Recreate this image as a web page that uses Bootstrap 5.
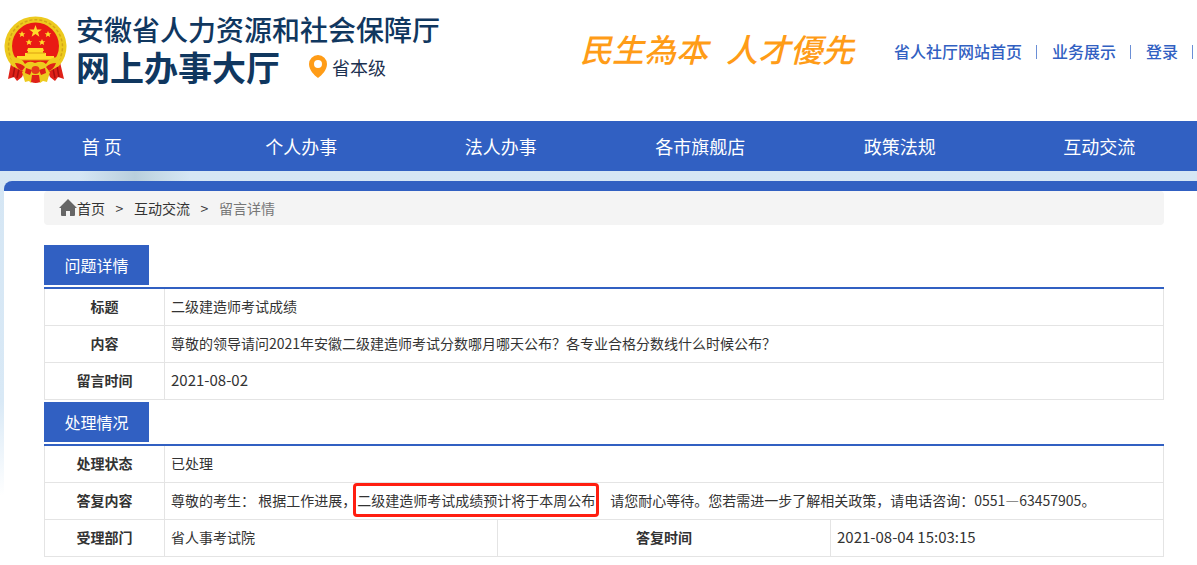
<!DOCTYPE html>
<html lang="zh-CN">
<head>
<meta charset="utf-8">
<meta name="viewport" content="width=device-width, initial-scale=1">
<title>安徽省人力资源和社会保障厅 网上办事大厅</title>
<link href="https://cdn.jsdelivr.net/npm/bootstrap@5.3.0/dist/css/bootstrap.min.css" rel="stylesheet">
<style>
:root{--brand:#3160c2;--navy:#10375f;--line:#e4e4e4}
body{font-family:"Noto Sans CJK SC",sans-serif;font-size:14px;line-height:20px;color:#333;background:#fff;overflow-x:hidden}
a{text-decoration:none}
.site-head{min-height:121px;padding:10px 0 0 4px}
.emblem{width:64px;height:72px;flex:none;margin-top:2px}
.org-name{font-size:28px;line-height:38px;font-weight:500;color:var(--navy);margin:0}
.hall-name{font-size:34px;line-height:38px;font-weight:700;color:var(--navy);margin:0}
.region{font-size:18px;line-height:24px;color:#1c3150}
.slogan{font-size:32px;line-height:40px;font-style:italic;font-weight:500;color:#ff9c17;gap:18px;margin-top:18px}
.top-links{font-size:16px;line-height:24px;margin-top:29px}
.top-links a{color:var(--brand);font-weight:500}
.top-links i{width:1px;height:14px;background:#6b8fd6;margin:2px 15px 0 14px}
.main-nav{background:var(--brand);overflow:hidden}
.main-nav ul{margin:0 -2px 0 2px}
.main-nav a{color:#fff;font-size:18px;line-height:50px;padding:0}
.backdrop{background:linear-gradient(90deg,transparent 80px,#b9cfdc 135px,#c5d9e5 155px,transparent 190px) 0 0/100% 10px no-repeat,linear-gradient(#d5e6f4 0,#d9e9f6 230px,#fff 325px);padding:10px 0 0 4px}
.panel{background:#fff;border-top:10px solid var(--brand);border-top-left-radius:8px;padding:0 33px 6px 40px}
.crumbs{background:#f4f4f4;border-radius:4px;height:34px;padding:0 0 0 15px;margin-bottom:20px}
.crumbs a{color:#333}
.crumbs .sep{width:29px;text-align:center}
.crumbs .here{color:#777}
.section-head{border-bottom:2px solid var(--brand);padding-bottom:2px}
.section-head h2{background:var(--brand);color:#fff;font-size:16px;line-height:40px;font-weight:400;width:105px;text-align:center;margin:0}
.info{width:100%;table-layout:fixed;border-collapse:separate;border-spacing:0;border-left:1px solid var(--line);margin-bottom:2px}
.info th,.info td{height:37px;padding:0 6px 2px;border:solid var(--line);border-width:0 1px 1px 0}
.info th{text-align:center;font-weight:700}
.info .c-label{width:120px}
.info time{font-size:15px}
.boxed{outline:3px solid #ff1e10;border-radius:1px;padding:4px 1px}
</style>
</head>
<body>
<header class="site-head d-flex align-items-start">
  <svg class="emblem" viewBox="0 0 64 72" aria-hidden="true">
    <path d="M8 46 4 67l6-2 3 4 5-4 5-12M55 46l5 21-6-2-3 4-5-4-5-12" fill="#df2118"/>
    <path d="M11 54 9 65M15 57l-2 9M53 54l2 11M49 57l2 9" stroke="#a8110e" stroke-width="1.500"/>
    <path d="M8 54A31 30 0 1 1 55 54L44 60H20z" fill="#edca1e"/>
    <path d="M8 48A27 27 0 1 1 55 48" fill="none" stroke="#d3a417" stroke-width="1.500" stroke-dasharray="3 2"/>
    <path d="M18 60 21 70l4-1 2 2 4-6 5 6 3-2 4 1 3-10-13-6z" fill="#edca1e"/>
    <circle cx="31.500" cy="34" r="23.500" fill="#e91a14"/>
    <g fill="#ffdc2b">
      <path d="m31.500 13 1.600 4.400h4.700l-3.700 2.900 1.300 4.500-3.900-2.700-3.900 2.700 1.300-4.500-3.700-2.900h4.700z"/>
      <path id="small-star" d="m18 19 1 2.200h2.300l-1.800 1.500.7 2.300-2.200-1.300-2.200 1.300.7-2.300-1.800-1.500H17z"/>
      <use href="#small-star" x="26"/><use href="#small-star" x="7" y="8"/><use href="#small-star" x="20" y="8"/>
      <path d="M24 36h15l1 3h-1v2h3v3h8v4H13v-4h8v-3h3v-2h-1z"/>
    </g>
    <path d="M14 48h35M23 41h18" stroke="#dca013"/>
    <path d="M6 45q11-1 15 7 4-4 10-1 7-3 11 1 4-8 15-7-3 8-13 11l-6 2-3 5h-7l-3-5-6-2Q9 53 6 45z" fill="#edca1e"/>
    <path d="M11 51q6 0 10 4l-3 4q-5-2-7-8zM52 51q-6 0-10 4l3 4q5-2 7-8zM22 56l6 2-2 5-5-2zM41 56l-6 2 2 5 5-2zM28 63h7l1 7q-4 2-9 0z" fill="#df2118"/>
    <circle cx="31.500" cy="58" r="4" fill="#e63b18"/>
  </svg>
  <div class="ps-2">
    <p class="org-name text-nowrap">安徽省人力资源和社会保障厅</p>
    <div class="d-flex align-items-center">
      <h1 class="hall-name text-nowrap">网上办事大厅</h1>
      <a href="#" class="region d-flex align-items-center ms-4">
        <svg class="ms-1 me-1" width="20" height="24" viewBox="0 0 20 24" aria-hidden="true"><path d="M10 0a9 9 0 0 0-9 9c0 6 5 11 9 14 4-3 9-8 9-14a9 9 0 0 0-9-9zm0 5a4 4 0 1 1 0 8 4 4 0 0 1 0-8z" fill="#ff9c17" fill-rule="evenodd"/></svg>省本级</a>
    </div>
  </div>
  <div class="slogan d-flex text-nowrap ms-auto"><span>民生為本</span><span>人才優先</span></div>
  <nav class="top-links d-flex align-items-center text-nowrap ms-4 ps-3" aria-label="快捷链接">
    <a href="#">省人社厅网站首页</a><i></i><a href="#">业务展示</a><i></i><a href="#">登录</a><i class="me-1"></i>
  </nav>
</header>

<nav class="main-nav" aria-label="主导航">
  <ul class="nav nav-fill row row-cols-6 gx-0 flex-nowrap">
    <li class="nav-item col"><a class="nav-link" href="#">首 页</a></li>
    <li class="nav-item col"><a class="nav-link" href="#">个人办事</a></li>
    <li class="nav-item col"><a class="nav-link" href="#">法人办事</a></li>
    <li class="nav-item col"><a class="nav-link" href="#">各市旗舰店</a></li>
    <li class="nav-item col"><a class="nav-link" href="#">政策法规</a></li>
    <li class="nav-item col"><a class="nav-link" href="#">互动交流</a></li>
  </ul>
</nav>

<div class="backdrop">
  <main class="panel">
    <nav class="crumbs d-flex align-items-center" aria-label="面包屑">
      <svg width="18" height="18" viewBox="0 0 18 18" aria-hidden="true"><path d="M9 0 0 9h2v7q0 1 1 1h4v-6h4v6h4q1 0 1-1V9h2L9 0z" fill="#666"/><path d="M3 9h12v7H11v-4H7v4H3z" fill="#666"/></svg>
      <a href="#">首页</a><span class="sep">&gt;</span><a href="#">互动交流</a><span class="sep">&gt;</span><span class="here">留言详情</span>
    </nav>

    <div class="section-head"><h2>问题详情</h2></div>
    <table class="info">
      <colgroup><col class="c-label"><col></colgroup>
      <tbody>
        <tr><th scope="row">标题</th><td>二级建造师考试成绩</td></tr>
        <tr><th scope="row">内容</th><td>尊敬的领导请问2021年安徽二级建造师考试分数哪月哪天公布？各专业合格分数线什么时候公布？</td></tr>
        <tr><th scope="row">留言时间</th><td><time>2021-08-02</time></td></tr>
      </tbody>
    </table>

    <div class="section-head"><h2>处理情况</h2></div>
    <table class="info">
      <colgroup><col class="c-label"><col><col><col></colgroup>
      <tbody>
        <tr><th scope="row">处理状态</th><td colspan="3">已处理</td></tr>
        <tr><th scope="row">答复内容</th><td colspan="3">尊敬的考生： 根据工作进展，<span class="boxed">二级建造师考试成绩预计将于本周公布</span>　请您耐心等待。您若需进一步了解相关政策，请电话咨询：0551—63457905。</td></tr>
        <tr><th scope="row">受理部门</th><td>省人事考试院</td><th scope="row">答复时间</th><td><time>2021-08-04 15:03:15</time></td></tr>
      </tbody>
    </table>
  </main>
</div>
<script src="https://cdn.jsdelivr.net/npm/bootstrap@5.3.0/dist/js/bootstrap.bundle.min.js"></script>
</body>
</html>
